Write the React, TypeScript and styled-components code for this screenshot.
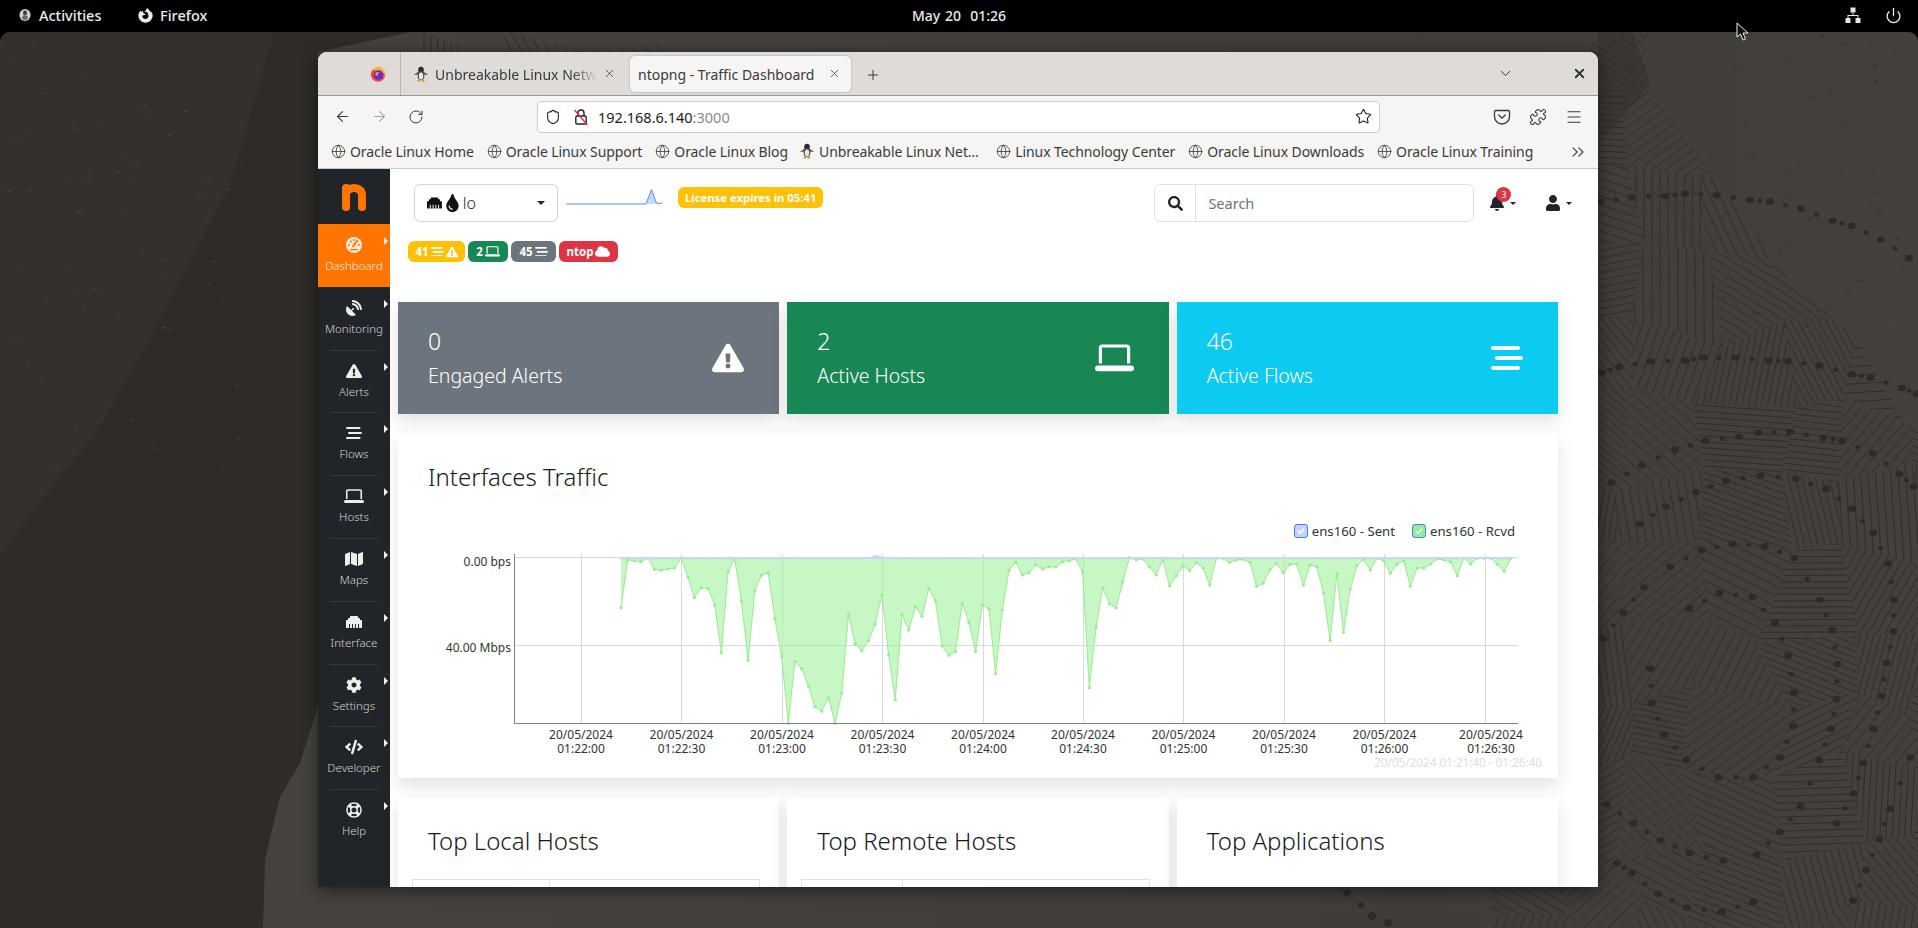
import { createGlobalStyle, styled } from "styled-components";
import {
	FaBell,
	FaCloud,
	FaCode,
	FaCog,
	FaEthernet,
	FaExclamationTriangle,
	FaFirefoxBrowser,
	FaMap,
	FaRegLifeRing,
	FaSatelliteDish,
	FaSearch,
	FaTint,
	FaUser,
} from "react-icons/fa";
import {
	ArrowLeft,
	ArrowRight,
	ChevronDown,
	ChevronsRight,
	Globe,
	Menu,
	Plus,
	Power,
	Puzzle,
	RotateCw,
	Shield,
	Star,
	X,
} from "lucide-react";

const UI_FONT = `"Noto Sans", "Open Sans", sans-serif`;
const PAGE_FONT = `"Noto Sans", "Open Sans", sans-serif`;

const GlobalStyle = createGlobalStyle`
	html, body {
		margin: 0;
		padding: 0;
		background: #000;
		overflow: hidden;
	}
	* {
		box-sizing: border-box;
	}
`;

const Screen = styled.div`
	position: relative;
	display: flex;
	flex-direction: column;
	width: 1918px;
	height: 928px;
	overflow: hidden;
	background: #000;
	font-family: ${UI_FONT};
`;

const TopBar = styled.div`
	position: relative;
	display: flex;
	align-items: center;
	flex: 0 0 32px;
	padding: 0 16px 2px 19px;
	color: #ececec;
	font-size: 14.5px;
	font-weight: 500;
`;

const TopItem = styled.div<{ $gap: number; $width?: number }>`
	display: flex;
	align-items: center;
	gap: ${(p) => p.$gap}px;
	width: ${(p) => (p.$width ? `${p.$width}px` : "auto")};
`;

const Clock = styled.div`
	position: absolute;
	left: 0;
	right: 0;
	text-align: center;
	font-size: 14px;
	word-spacing: 1px;
	pointer-events: none;
`;

const TopRight = styled.div`
	display: flex;
	align-items: center;
	gap: 24px;
	margin-left: auto;
`;

const Cursor = styled.svg`
	position: absolute;
	left: 1736px;
	top: 22px;
	z-index: 5;
`;

const Desktop = styled.div`
	position: relative;
	flex: 1;
	min-height: 0;
	padding: 20px 0 0 318px;
	border-radius: 10px 10px 0 0;
	overflow: hidden;
	background: #2e2b28;
`;

const WallpaperSvg = styled.svg`
	position: absolute;
	left: 0;
	top: 0;
`;

const BrowserWindow = styled.div`
	position: relative;
	display: flex;
	flex-direction: column;
	width: 1280px;
	height: 835px;
	border-radius: 9px 9px 0 0;
	overflow: hidden;
	box-shadow: 0 3px 16px rgba(0, 0, 0, 0.55);
	background: #fff;
`;

const TabBar = styled.div`
	display: flex;
	align-items: center;
	flex: 0 0 44px;
	background: #dedbd8;
	border-bottom: 1px solid #999794;
	color: #3a3a3a;
	font-size: 14px;
`;

const FirefoxCell = styled.div`
	display: flex;
	align-items: center;
	justify-content: flex-end;
	align-self: stretch;
	width: 83px;
	padding-right: 14px;
	border-right: 1px solid #b9b6b3;
`;

const Tab = styled.div<{ $active?: boolean }>`
	display: flex;
	align-items: center;
	height: 36px;
	width: ${(p) => (p.$active ? 221 : 229)}px;
	padding: ${(p) => (p.$active ? "0 10px 0 8px" : "0 14px 0 12px")};
	gap: 6px;
	border-radius: 5px;
	background: ${(p) => (p.$active ? "#f6f5f4" : "transparent")};
	box-shadow: ${(p) => (p.$active ? "0 0 2px rgba(0,0,0,.3)" : "none")};
`;

const TabLabel = styled.span<{ $fade?: boolean }>`
	flex: 1;
	margin-top: 1px;
	overflow: hidden;
	white-space: nowrap;
	${(p) =>
		p.$fade
			? "mask-image: linear-gradient(to right, #000 85%, transparent 100%);"
			: ""}
`;

const NewTab = styled.div`
	display: flex;
	margin: 2px 0 0 14px;
	color: #3a3a3a;
`;

const TabEnd = styled.div`
	display: flex;
	align-items: center;
	gap: 58px;
	margin-left: auto;
	padding-right: 11px;
	color: #333;
`;

const NavBar = styled.div`
	display: flex;
	align-items: center;
	flex: 0 0 39px;
	padding: 2px 0 0 16px;
	background: #f6f5f4;
	color: #3a3a3a;
`;

const NavIcons = styled.div`
	display: flex;
	align-items: center;
	gap: 20px;
	width: 203px;
`;

const UrlBar = styled.div`
	display: flex;
	align-items: center;
	width: 843px;
	height: 32px;
	padding: 0 7px 0 7px;
	background: #fff;
	border: 1px solid #cfcdca;
	border-radius: 4px;
	font-size: 14.5px;
	color: #1c1c1c;
`;

const UrlGap = styled.span`
	width: 13px;
`;

const UrlText = styled.span`
	margin-left: 10px;
	flex: 1;
`;

const UrlPort = styled.span`
	color: #8a8a8a;
`;

const NavTools = styled.div`
	display: flex;
	align-items: center;
	gap: 18px;
	margin-left: 113px;
`;

const BookmarkBar = styled.div`
	position: relative;
	display: flex;
	align-items: center;
	flex: 0 0 34px;
	padding: 0 0 1px 13px;
	gap: 13px;
	background: #f6f5f4;
	border-bottom: 1px solid #cdcbc8;
	color: #3a3a3a;
	font-size: 14px;
	letter-spacing: -0.09px;
`;

const Bookmark = styled.div<{ $tux?: boolean }>`
	display: flex;
	align-items: center;
	gap: 4px;
	margin: ${(p) => (p.$tux ? "0 4.4px 0 -2px" : "0")};
	white-space: nowrap;
`;

const BookmarkMore = styled.div`
	display: flex;
	position: absolute;
	right: 10px;
	top: 7px;
`;

const PageArea = styled.div`
	display: flex;
	flex: 1;
	min-height: 0;
`;

const Sidebar = styled.div`
	flex: 0 0 72px;
	background: #212529;
`;

const LogoBox = styled.div`
	display: flex;
	align-items: center;
	justify-content: center;
	height: 55px;
	padding-top: 1px;
`;

const NavItem = styled.div<{ $active?: boolean; $line?: boolean }>`
	position: relative;
	display: flex;
	flex-direction: column;
	align-items: center;
	gap: 5px;
	height: 62.8px;
	padding-top: 13px;
	background: ${(p) => (p.$active ? "#ff7500" : "transparent")};
	color: ${(p) => (p.$active ? "#ffeee2" : "#d2d4d6")};
	font-size: 11.5px;
	font-weight: 300;
	line-height: 15px;

	&::before {
		content: "";
		display: ${(p) => (p.$line ? "block" : "none")};
		position: absolute;
		left: 12px;
		right: 12px;
		top: 0;
		border-top: 1px solid rgba(255, 255, 255, 0.09);
	}

	&::after {
		content: "";
		position: absolute;
		right: 2px;
		top: 13px;
		border-left: 4px solid #f0f0f0;
		border-top: 4px solid transparent;
		border-bottom: 4px solid transparent;
	}
`;

const NavIcon = styled.div`
	display: flex;
	align-items: center;
	justify-content: center;
	height: 16px;
	color: #eceded;
`;

const Main = styled.div`
	flex: 1;
	min-width: 0;
	overflow: hidden;
	background: #fff;
	font-family: ${PAGE_FONT};
	color: #212529;
`;

const Header = styled.div`
	display: flex;
	align-items: flex-start;
	padding: 15px 26px 0 24px;
`;

const Select = styled.div`
	display: flex;
	align-items: center;
	width: 144px;
	height: 38px;
	padding: 0 12px;
	gap: 3px;
	border: 1px solid #ced4da;
	border-radius: 6px;
	color: #212529;
	font-size: 16px;
	font-weight: 300;
`;

const Caret = styled.span<{ $size?: number; $color?: string; $left?: number }>`
	display: inline-block;
	margin-left: ${(p) => p.$left ?? 0}px;
	border-top: ${(p) => p.$size ?? 4}px solid ${(p) => p.$color ?? "#212529"};
	border-left: ${(p) => p.$size ?? 4}px solid transparent;
	border-right: ${(p) => p.$size ?? 4}px solid transparent;
`;

const Spark = styled.svg`
	flex: none;
	margin-left: 8px;
	margin-top: 3px;
`;

const LicenseBadge = styled.div`
	display: flex;
	align-items: center;
	height: 21px;
	margin: 3px 0 0 16px;
	padding: 0 7px;
	border-radius: 6px;
	background: #ffc107;
	color: #fff;
	font-size: 11.3px;
	font-weight: 700;
	white-space: nowrap;
`;

const SearchGroup = styled.div`
	display: flex;
	height: 38px;
	width: 320px;
	margin-left: auto;
	border: 1px solid #dee2e6;
	border-radius: 6px;
`;

const SearchIcon = styled.div`
	display: flex;
	align-items: center;
	justify-content: center;
	flex: 0 0 41px;
	border-right: 1px solid #dee2e6;
	color: #212529;
`;

const SearchInput = styled.input`
	flex: 1;
	min-width: 0;
	padding: 0 12px;
	border: 0;
	outline: 0;
	background: transparent;
	font-family: inherit;
	font-size: 14.5px;

	&::placeholder {
		color: #6c757d;
	}
`;

const HeadTool = styled.div<{ $left: number }>`
	position: relative;
	display: flex;
	align-items: center;
	gap: 5px;
	height: 38px;
	margin-left: ${(p) => p.$left}px;
	color: #212529;
`;

const CountBubble = styled.span`
	position: absolute;
	left: 7px;
	top: 3px;
	display: flex;
	align-items: center;
	justify-content: center;
	width: 15px;
	height: 15px;
	border-radius: 50%;
	background: #dc3545;
	color: #fff;
	font-size: 9px;
`;

const BadgeRow = styled.div`
	display: flex;
	gap: 3px;
	margin: 19px 0 0 18px;
`;

const Badge = styled.div<{ $bg: string; $width: number }>`
	display: flex;
	align-items: center;
	justify-content: center;
	gap: 2px;
	width: ${(p) => p.$width}px;
	height: 21px;
	border-radius: 6px;
	background: ${(p) => p.$bg};
	color: #fff;
	font-size: 11.5px;
	font-weight: 700;
`;

const CardGrid = styled.div<{ $top: number }>`
	display: grid;
	grid-template-columns: repeat(3, 1fr);
	gap: 8px;
	width: 1160px;
	margin: ${(p) => p.$top}px 0 0 8px;
`;

const StatCard = styled.div<{ $bg: string; $inset: number }>`
	display: flex;
	justify-content: space-between;
	align-items: center;
	height: 112px;
	padding: 0 ${(p) => p.$inset}px 0 30px;
	background: ${(p) => p.$bg};
	color: #fff;
	box-shadow: 0 8px 16px rgba(33, 37, 41, 0.13);
`;

const StatText = styled.div`
	align-self: flex-start;
	padding-top: 25px;
`;

const StatValue = styled.div`
	font-size: 23px;
	font-weight: 300;
	line-height: 28px;
	margin-bottom: 7px;
`;

const StatLabel = styled.div`
	font-size: 19.5px;
	font-weight: 300;
	line-height: 28px;
`;

const ChartCard = styled.div`
	width: 1160px;
	height: 344px;
	margin: 20px 0 0 8px;
	padding-top: 29px;
	background: #fff;
	box-shadow: 0 8px 16px rgba(33, 37, 41, 0.13);
`;

const CardTitle = styled.h3`
	margin: 0;
	padding-left: 30px;
	font-size: 24px;
	font-weight: 300;
	line-height: 28px;
	color: #16191c;
`;

const Legend = styled.div`
	display: flex;
	justify-content: flex-end;
	gap: 17px;
	height: 20px;
	margin-top: 30px;
	padding-right: 43px;
	font-size: 13.2px;
	line-height: 20px;
	color: #333;
`;

const LegendItem = styled.div`
	display: flex;
	align-items: center;
	gap: 4px;
`;

const LegendBox = styled.span<{ $fill: string }>`
	display: flex;
	align-items: center;
	justify-content: center;
	width: 14px;
	height: 14px;
	border: 1px solid #3b82f6;
	border-radius: 3px;
	background: ${(p) => p.$fill};
`;

const ChartSvg = styled.svg`
	display: block;
	margin-top: -1px;
	font-family: ${UI_FONT};
`;

const ListCard = styled.div`
	height: 120px;
	padding-top: 29px;
	background: #fff;
	box-shadow: 0 8px 16px rgba(33, 37, 41, 0.13);
`;

const TopTable = styled.div<{ $first: number; $left: number; $right: number }>`
	display: grid;
	grid-template-columns: ${(p) => p.$first}px 1fr;
	height: 40px;
	margin: 24px ${(p) => p.$right}px 0 ${(p) => p.$left}px;
	border: 1px solid #dee2e6;

	& > div + div {
		border-left: 1px solid #dee2e6;
	}
`;

function seeded(seed: number) {
	let s = seed;
	return () => {
		s = (s * 16807) % 2147483647;
		return s / 2147483647;
	};
}

// dotted trails of the wallpaper, read off the reference (crop coordinates)
const DOT_TRAILS = [
	[[30, 300], [125, 292], [225, 290], [285, 286], [380, 288], [480, 297], [540, 300], [633, 312], [728, 333], [785, 342], [873, 366], [957, 398]],
	[[35, 598], [88, 588], [182, 579], [285, 577], [340, 572], [436, 572], [536, 578], [594, 578], [688, 586], [786, 601], [842, 607], [935, 625], [980, 635]],
	[[505, 703], [600, 702], [700, 712], [758, 717], [848, 739], [928, 775], [970, 797]],
	[[65, 790], [155, 760], [255, 733], [347, 717], [447, 710]],
	[[150, 862], [228, 832], [318, 807], [408, 787], [510, 778], [617, 783], [708, 801], [785, 836], [850, 878], [895, 932], [912, 995], [910, 1050], [890, 1105], [875, 1163], [850, 1220], [820, 1280], [790, 1333], [740, 1385]],
	[[240, 937], [335, 908], [427, 897], [524, 901], [613, 922], [690, 995], [727, 1048], [742, 1107], [740, 1168], [722, 1220], [688, 1275], [632, 1355], [570, 1400], [500, 1440]],
	[[40, 1062], [100, 1017], [162, 973]],
	[[298, 1010], [388, 983], [487, 990], [555, 1035], [595, 1092], [612, 1157], [610, 1215], [570, 1270]],
	[[180, 1115], [185, 1175], [222, 1230], [288, 1275], [385, 1305], [490, 1305], [570, 1270]],
	[[50, 1352], [130, 1385], [212, 1415], [298, 1437], [400, 1450]],
	[[80, 1455], [125, 1472], [205, 1508], [290, 1532], [395, 1540], [490, 1522]],
	[[960, 1270], [900, 1360], [868, 1413], [828, 1467], [790, 1520]],
];

const HATCH_AREA =
	"1647,32 1647,55 1707,135 1790,250 1857,307 1907,393 1918,398 1918,928 1490,928 1490,855 1590,855 1590,-20 1647,-20";

function Wallpaper() {
	const rnd = seeded(4211);
	const size = 74;
	const jitter = (v: number) => v + (rnd() - 0.5) * 44;
	const verts: [number, number][][] = [];
	for (let i = 0; i < 28; i++) {
		const col: [number, number][] = [];
		for (let j = 0; j < 14; j++) {
			col.push([jitter(i * size), jitter(j * size)]);
		}
		verts.push(col);
	}
	const cells: { id: string; pts: string; lines: string }[] = [];
	for (let i = 0; i < 27; i++) {
		for (let j = 0; j < 13; j++) {
			const a = verts[i][j];
			const b = verts[i + 1][j];
			const c = verts[i + 1][j + 1];
			const d = verts[i][j + 1];
			const angle = rnd() * Math.PI;
			const gap = 6 + rnd() * 3;
			const cx = (a[0] + c[0]) / 2;
			const cy = (a[1] + c[1]) / 2;
			const inStrip = cy > 810 && cx > 1440;
			const inTop = cy < 50 && cx > 400 && cx < 700;
			if (b[0] < 1590 && !inStrip && !inTop) continue;
			let lines = "";
			for (let k = -90; k < 90; k += gap) {
				const nx = -Math.sin(angle) * k;
				const ny = Math.cos(angle) * k;
				const ux = Math.cos(angle) * 90;
				const uy = Math.sin(angle) * 90;
				lines += `M${(cx + nx - ux).toFixed(1)} ${(cy + ny - uy).toFixed(1)}L${(cx + nx + ux).toFixed(1)} ${(cy + ny + uy).toFixed(1)}`;
			}
			cells.push({
				id: `cell-${i}-${j}`,
				pts: [a, b, c, d].map((v) => v.join(",")).join(" "),
				lines,
			});
		}
	}
	const dots: { x: number; y: number; rx: number; ry: number }[] = [];
	for (const trail of DOT_TRAILS) {
		trail.forEach(([zx, zy], i) => {
			const x = 1590 + zx / 3;
			const y = 30 + zy / 1.746 - 32;
			dots.push({ x, y, rx: 4, ry: 3.2 });
			if (i + 1 < trail.length) {
				const nx = 1590 + trail[i + 1][0] / 3;
				const ny = 30 + trail[i + 1][1] / 1.746 - 32;
				dots.push({ x: (x + nx) / 2, y: (y + ny) / 2, rx: 2.6, ry: 2.2 });
			}
		});
	}
	const specks: { x: number; y: number; w: number; light: boolean }[] = [];
	for (let i = 0; i < 130; i++) {
		const light = i < 60;
		specks.push(
			light
				? { x: rnd() * 250, y: rnd() * 440, w: 1 + rnd() * 2.4, light }
				: { x: 1650 + rnd() * 268, y: rnd() * 300, w: 0.8 + rnd() * 1.8, light },
		);
	}
	return (
		<WallpaperSvg width="1918" height="896" viewBox="0 0 1918 896">
			<defs>
				<clipPath id="hatch-area">
					<polygon points={HATCH_AREA} />
					<rect x="420" y="-5" width="260" height="30" />
				</clipPath>
				{cells.map((c) => (
					<clipPath key={c.id} id={c.id}>
						<polygon points={c.pts} />
					</clipPath>
				))}
				<linearGradient id="wall-light" x1="0" x2="1" y1="0" y2="0">
					<stop offset="0" stopColor="#46423f" />
					<stop offset="0.7" stopColor="#403c39" />
					<stop offset="1" stopColor="#44403d" />
				</linearGradient>
			</defs>
			<polygon points="0,522 97,399 150,307 230,153 275,-2 0,-2" fill="#33302d" />
			<polygon
				points="263,896 265,828 280,765 300,731 318,674 318,20 420,-2 1918,-2 1918,896"
				fill="url(#wall-light)"
			/>
			<polygon points="1598,-2 1632,-2 1650,52 1612,98 1598,108" fill="#3a3633" />
			<g clipPath="url(#hatch-area)">
				{cells.map((c) => (
					<g key={c.id} clipPath={`url(#${c.id})`}>
						<path d={c.lines} stroke="#322e2b" strokeWidth="1" fill="none" />
					</g>
				))}
			</g>
			{dots.map((d, i) => (
				<ellipse
					key={`dot-${i.toString()}`}
					cx={d.x}
					cy={d.y}
					rx={d.rx}
					ry={d.ry}
					fill="#2e2a28"
				/>
			))}
			<ellipse cx="1347" cy="861" rx="3.5" ry="3.5" fill="#2e2a28" />
			<ellipse cx="1361" cy="873" rx="3" ry="3" fill="#2e2a28" />
			<ellipse cx="1372" cy="884" rx="4" ry="4" fill="#2e2a28" />
			<ellipse cx="1388" cy="891" rx="4" ry="4" fill="#2e2a28" />
			{specks.map((s, i) => (
				<ellipse
					key={`speck-${i.toString()}`}
					cx={s.x}
					cy={s.y}
					rx={s.w}
					ry="0.6"
					fill={s.light ? "#45413d" : "#322e2b"}
				/>
			))}
		</WallpaperSvg>
	);
}

function FirefoxLogo() {
	return (
		<svg width="16" height="16" viewBox="0 0 16 16">
			<circle cx="8" cy="8.6" r="7.2" fill="#f2483f" />
			<path d="M3 4 C5 1 8 0 10 0 C10 1 11 1.5 12.5 2.5 C15 4.5 15.5 8 15 10 C14 6 11 4.5 8 5 Z" fill="#ffb52e" />
			<circle cx="8.4" cy="9" r="4.8" fill="#6a2bd4" />
			<path d="M5 8 C6 5.5 9 5.5 10 6.5 L7.5 7.5 L8.5 9 C7 10 5.5 9.5 5 8 Z" fill="#ffa436" />
		</svg>
	);
}

function TuxIcon() {
	return (
		<svg width="16" height="16" viewBox="0 0 16 16">
			<path d="M0.5 9 L5 6 L11 6 L15.5 9 L11 8.5 L5 8.5 Z" fill="#57534e" />
			<ellipse cx="8" cy="4" rx="2.8" ry="3.2" fill="#2a2a2a" />
			<ellipse cx="8" cy="9.5" rx="3.4" ry="4.6" fill="#4a4a4a" />
			<ellipse cx="8" cy="10" rx="2.2" ry="3.4" fill="#e8e8e8" />
			<path d="M4.5 14 h3 v1.5 h-3z M8.5 14 h3 v1.5 h-3z" fill="#c9a227" />
		</svg>
	);
}

function BrokenLock() {
	return (
		<svg width="14" height="18" viewBox="0 0 14 18" fill="none">
			<path d="M4 8 V5 a3 3 0 0 1 6 0 V8" stroke="#222" strokeWidth="1.4" />
			<rect x="1.8" y="8" width="10.4" height="8" rx="1.6" stroke="#222" strokeWidth="1.4" />
			<path d="M0.5 2 L13.5 17" stroke="#e22850" strokeWidth="1.4" />
		</svg>
	);
}

function PocketIcon() {
	return (
		<svg width="18" height="18" viewBox="0 0 18 18" fill="none" stroke="#3a3a3a" strokeWidth="1.3">
			<path d="M2.5 2.5 H15.5 a1 1 0 0 1 1 1 V8.5 a7.5 7.5 0 0 1 -15 0 V3.5 a1 1 0 0 1 1 -1 Z" />
			<path d="M5.8 7 L9 10.2 L12.2 7" strokeLinecap="round" />
		</svg>
	);
}

function NetworkIcon() {
	return (
		<svg width="16" height="16" viewBox="0 0 16 16" fill="#e6e6e6">
			<rect x="5.5" y="0.5" width="5" height="5" />
			<rect x="0.5" y="11" width="5" height="5" />
			<rect x="10.5" y="11" width="5" height="5" />
			<path d="M7.5 5.5 h1 V8 H13.5 V11 h-1 V9 H3.5 V11 h-1 V8 H7.5 Z" />
		</svg>
	);
}

function ActivitiesIcon() {
	return (
		<svg width="12" height="14" viewBox="0 0 12 14">
			<ellipse cx="6" cy="7" rx="5.6" ry="6" fill="#cfcfcf" />
			<ellipse cx="6" cy="5" rx="2" ry="2.4" fill="#3c3c3c" />
			<ellipse cx="6" cy="9.6" rx="2.8" ry="2.4" fill="#6a6a6a" />
		</svg>
	);
}

function NtopLogo() {
	return (
		<svg width="24" height="27" viewBox="0 0 24 27" fill="none">
			<path
				d="M4 23 V4 M4 11.5 C4 6.5 7.5 4 12 4 C16.5 4 20 6.5 20 11.5 V23"
				stroke="#ff7500"
				strokeWidth="8"
				strokeLinecap="round"
			/>
		</svg>
	);
}

function FlowsIcon({ size }: { size: number }) {
	return (
		<svg width={size} height={(size * 24) / 32} viewBox="0 0 32 24" fill="none" stroke="currentColor" strokeWidth="4" strokeLinecap="round">
			<path d="M2 2 H27 M6 12 H30 M2 22 H27" />
		</svg>
	);
}

function LaptopIcon({ width }: { width: number }) {
	return (
		<svg width={width} height={(width * 28) / 40} viewBox="0 0 40 28" fill="none">
			<path d="M5.5 20 V4 a2 2 0 0 1 2 -2 H32.5 a2 2 0 0 1 2 2 V20" stroke="currentColor" strokeWidth="3.2" />
			<rect x="0" y="22" width="40" height="6" rx="3" fill="currentColor" />
		</svg>
	);
}

function GaugeIcon() {
	return (
		<svg width="16" height="16" viewBox="0 0 16 16">
			<circle cx="8" cy="8" r="8" fill="#fbe9dc" />
			<path d="M7 9.4 L11.2 3.6" stroke="#ff7500" strokeWidth="1.8" strokeLinecap="round" />
			<circle cx="3" cy="8" r="1" fill="#ff7500" />
			<circle cx="4.8" cy="4.5" r="1" fill="#ff7500" />
			<circle cx="8" cy="3" r="1" fill="#ff7500" />
			<circle cx="13" cy="8" r="1" fill="#ff7500" />
			<path d="M4 12.6 H12" stroke="#ff7500" strokeWidth="1.2" />
		</svg>
	);
}

function Sparkline() {
	return (
		<Spark width="96" height="20" viewBox="0 0 96 20">
			<path d="M0 17 H80 L85.5 2.5 L90 15 L92 16.5 L96 16 V17 Z" fill="#c4d8fb" />
			<path d="M0 17 H80 L85.5 2.5 L90 15 L92 16.5 L96 16" fill="none" stroke="#5b8def" strokeWidth="1" />
		</Spark>
	);
}

// received traffic: one sample every 2s, y read as crop pixels of the reference
const RCVD = [
	293, 150, 152, 155, 144, 178, 181, 177, 174, 145, 201, 263, 233, 236, 285, 428, 186, 147, 272, 451,
	241, 196, 188, 326, 438, 640, 454, 476, 528, 590, 604, 563, 640, 549, 312, 401, 422, 392, 342, 253,
	434, 569, 313, 360, 290, 319, 236, 271, 408, 436, 425, 280, 338, 424, 285, 296, 491, 300, 181, 157,
	195, 188, 164, 177, 170, 171, 156, 152, 147, 185, 533, 352, 234, 281, 294, 216, 143, 150, 147, 170,
	195, 149, 228, 197, 168, 182, 158, 174, 225, 144, 147, 157, 150, 148, 157, 229, 220, 180, 161, 188,
	163, 162, 225, 165, 171, 249, 392, 191, 367, 238, 167, 148, 180, 145, 152, 190, 163, 152, 229, 174,
	174, 162, 147, 150, 156, 197, 145, 162, 145, 145, 145, 163, 184, 146,
];

const X0 = 621;
const STEP = 6.69;
const BASE_Y = 558.3;
const GRID_X = [581, 681.5, 782.5, 882.5, 983.3, 1083, 1183.5, 1284.5, 1384.4, 1485.4];
const X_TICKS = [
	{ x: 581, t: "01:22:00" },
	{ x: 681.5, t: "01:22:30" },
	{ x: 782, t: "01:23:00" },
	{ x: 882.5, t: "01:23:30" },
	{ x: 983, t: "01:24:00" },
	{ x: 1083, t: "01:24:30" },
	{ x: 1183.5, t: "01:25:00" },
	{ x: 1284, t: "01:25:30" },
	{ x: 1384.5, t: "01:26:00" },
	{ x: 1491, t: "01:26:30" },
];

function TrafficChart() {
	const pts = RCVD.map((zy, i) => [X0 + i * STEP, 510 + zy / 3]);
	const line = pts.map((p) => `${p[0].toFixed(1)},${p[1].toFixed(1)}`).join(" ");
	const lastX = pts[pts.length - 1][0];
	const sentXs = pts.map((p) => p[0]);
	return (
		<ChartSvg width="1160" height="238" viewBox="398 540 1160 238">
			{GRID_X.map((x) => (
				<line key={x} x1={x} x2={x} y1="554" y2="723" stroke="#d9d9d9" shapeRendering="crispEdges" />
			))}
			<line x1="515" x2="1518" y1="557" y2="557" stroke="#d9d9d9" shapeRendering="crispEdges" />
			<line x1="515" x2="1518" y1="645" y2="645" stroke="#d9d9d9" shapeRendering="crispEdges" />
			<polygon
				points={`${X0},${BASE_Y} ${line} ${lastX},${BASE_Y}`}
				fill="#a5f2a0"
				fillOpacity="0.62"
			/>
			<polyline points={line} fill="none" stroke="#96ee8e" strokeWidth="1" />
			{pts.map((p, i) => (
				<circle key={`r-${i.toString()}`} cx={p[0]} cy={p[1]} r="1.6" fill="#96ee8e" />
			))}
			<line x1={X0} x2={lastX} y1={BASE_Y} y2={BASE_Y} stroke="#c9d6fb" strokeWidth="1.2" />
			{sentXs.map((x, i) => (
				<circle key={`s-${i.toString()}`} cx={x} cy={BASE_Y} r="1.5" fill="#c9d6fb" />
			))}
			<path d="M868 558 L873 556 L876 554.8 L880 556 L884 558 Z" fill="#c9d6fb" />
			<line x1="514.5" x2="514.5" y1="554" y2="723.5" stroke="#808080" />
			<line x1="514" x2="1518" y1="723.5" y2="723.5" stroke="#808080" />
			<text x="511" y="566" textAnchor="end" fontSize="12" fill="#333">0.00 bps</text>
			<text x="511" y="652" textAnchor="end" fontSize="12" fill="#333">40.00 Mbps</text>
			{X_TICKS.map((tick) => (
				<text key={tick.t} x={tick.x} textAnchor="middle" fontSize="12" fill="#333">
					<tspan x={tick.x} y="739">20/05/2024</tspan>
					<tspan x={tick.x} y="753">{tick.t}</tspan>
				</text>
			))}
			<text x="1542" y="767" textAnchor="end" fontSize="11.7" fill="#dddddd">
				20/05/2024 01:21:40 - 01:26:40
			</text>
		</ChartSvg>
	);
}

const SIDE_ITEMS = [
	{ label: "Dashboard", icon: <GaugeIcon />, active: true },
	{ label: "Monitoring", icon: <FaSatelliteDish size={16} /> },
	{ label: "Alerts", icon: <FaExclamationTriangle size={16} />, line: true },
	{ label: "Flows", icon: <FlowsIcon size={16} />, line: true },
	{ label: "Hosts", icon: <LaptopIcon width={20} />, line: true },
	{ label: "Maps", icon: <FaMap size={18} />, line: true },
	{ label: "Interface", icon: <FaEthernet size={16} />, line: true },
	{ label: "Settings", icon: <FaCog size={16} />, line: true },
	{ label: "Developer", icon: <FaCode size={18} />, line: true },
	{ label: "Help", icon: <FaRegLifeRing size={16} />, line: true },
];

const BOOKMARKS = [
	"Oracle Linux Home",
	"Oracle Linux Support",
	"Oracle Linux Blog",
	"Unbreakable Linux Net…",
	"Linux Technology Center",
	"Oracle Linux Downloads",
	"Oracle Linux Training",
];

export default function App() {
	return (
		<Screen>
			<GlobalStyle />
			<TopBar>
				<TopItem $gap={8} $width={119}>
					<ActivitiesIcon />
					Activities
				</TopItem>
				<TopItem $gap={7}>
					<FaFirefoxBrowser size={15} />
					Firefox
				</TopItem>
				<Clock>May 20 &nbsp;01:26</Clock>
				<TopRight>
					<NetworkIcon />
					<Power size={17} strokeWidth={1.8} />
				</TopRight>
			</TopBar>
			<Cursor width="13" height="19" viewBox="0 0 13 19">
				<path d="M1 1 L1 15 L4.5 12 L7 18 L9.5 17 L7 11 L12 11 Z" fill="#111" stroke="#eee" strokeWidth="1" />
			</Cursor>
			<Desktop>
				<Wallpaper />
				<BrowserWindow>
					<TabBar>
						<FirefoxCell>
							<FirefoxLogo />
						</FirefoxCell>
						<Tab>
							<TuxIcon />
							<TabLabel $fade>Unbreakable Linux Network</TabLabel>
							<X size={13} strokeWidth={1.4} />
						</Tab>
						<Tab $active>
							<TabLabel>ntopng - Traffic Dashboard</TabLabel>
							<X size={13} strokeWidth={1.4} />
						</Tab>
						<NewTab>
							<Plus size={16} strokeWidth={1.5} />
						</NewTab>
						<TabEnd>
							<ChevronDown size={17} strokeWidth={1.4} />
							<X size={15} strokeWidth={3} />
						</TabEnd>
					</TabBar>
					<NavBar>
						<NavIcons>
							<ArrowLeft size={17} strokeWidth={1.5} />
							<ArrowRight size={17} strokeWidth={1.5} color="#a8a8a8" />
							<RotateCw size={16} strokeWidth={1.5} />
						</NavIcons>
						<UrlBar>
							<Shield size={16} strokeWidth={1.6} />
							<UrlGap />
							<BrokenLock />
							<UrlText>
								192.168.6.140<UrlPort>:3000</UrlPort>
							</UrlText>
							<Star size={17} strokeWidth={1.5} />
						</UrlBar>
						<NavTools>
							<PocketIcon />
							<Puzzle size={18} strokeWidth={1.5} />
							<Menu size={18} strokeWidth={1.5} />
						</NavTools>
					</NavBar>
					<BookmarkBar>
						{BOOKMARKS.map((b) => (
							<Bookmark key={b} $tux={b.startsWith("Unbreakable")}>
								{b.startsWith("Unbreakable") ? (
									<TuxIcon />
								) : (
									<Globe size={15} strokeWidth={1.3} />
								)}
								{b}
							</Bookmark>
						))}
						<BookmarkMore>
							<ChevronsRight size={20} strokeWidth={1.3} />
						</BookmarkMore>
					</BookmarkBar>
					<PageArea>
						<Sidebar>
							<LogoBox>
								<NtopLogo />
							</LogoBox>
							{SIDE_ITEMS.map((item) => (
								<NavItem key={item.label} $active={item.active} $line={item.line}>
									<NavIcon>{item.icon}</NavIcon>
									{item.label}
								</NavItem>
							))}
						</Sidebar>
						<Main>
							<Header>
								<Select>
									<FaEthernet size={18} color="#111" />
									<FaTint size={18} color="#111" />
									<span>lo</span>
									<Caret $left={58} />
								</Select>
								<Sparkline />
								<LicenseBadge>License expires in 05:41</LicenseBadge>
								<SearchGroup>
									<SearchIcon>
										<FaSearch size={15} />
									</SearchIcon>
									<SearchInput placeholder="Search" readOnly />
								</SearchGroup>
								<HeadTool $left={15}>
									<FaBell size={16} />
									<CountBubble>3</CountBubble>
									<Caret $size={3.5} $left={0} />
								</HeadTool>
								<HeadTool $left={28.6}>
									<FaUser size={16} />
									<Caret $size={3.5} $left={0} />
								</HeadTool>
							</Header>
							<BadgeRow>
								<Badge $bg="#ffc107" $width={57}>
									41 <FlowsIcon size={13} /> <FaExclamationTriangle size={12} />
								</Badge>
								<Badge $bg="#198754" $width={40}>
									2 <LaptopIcon width={15} />
								</Badge>
								<Badge $bg="#6c757d" $width={45}>
									45 <FlowsIcon size={13} />
								</Badge>
								<Badge $bg="#dc3545" $width={59}>
									ntop <FaCloud size={15} />
								</Badge>
							</BadgeRow>
							<CardGrid $top={40}>
								<StatCard $bg="#6c757d" $inset={35}>
									<StatText>
										<StatValue>0</StatValue>
										<StatLabel>Engaged Alerts</StatLabel>
									</StatText>
									<FaExclamationTriangle size={32} />
								</StatCard>
								<StatCard $bg="#198754" $inset={35}>
									<StatText>
										<StatValue>2</StatValue>
										<StatLabel>Active Hosts</StatLabel>
									</StatText>
									<LaptopIcon width={39} />
								</StatCard>
								<StatCard $bg="#0dcaf0" $inset={35}>
									<StatText>
										<StatValue>46</StatValue>
										<StatLabel>Active Flows</StatLabel>
									</StatText>
									<FlowsIcon size={32} />
								</StatCard>
							</CardGrid>
							<ChartCard>
								<CardTitle>Interfaces Traffic</CardTitle>
								<Legend>
									<LegendItem>
										<LegendBox $fill="#c6d4fb">
											<svg width="8" height="8" viewBox="0 0 8 8" fill="none" stroke="#fff" strokeWidth="1.4">
												<path d="M1 4 L3.2 6.2 L7 1.8" />
											</svg>
										</LegendBox>
										ens160 - Sent
									</LegendItem>
									<LegendItem>
										<LegendBox $fill="#96ee8e">
											<svg width="8" height="8" viewBox="0 0 8 8" fill="none" stroke="#fff" strokeWidth="1.4">
												<path d="M1 4 L3.2 6.2 L7 1.8" />
											</svg>
										</LegendBox>
										ens160 - Rcvd
									</LegendItem>
								</Legend>
								<TrafficChart />
							</ChartCard>
							<CardGrid $top={20}>
								<ListCard>
									<CardTitle>Top Local Hosts</CardTitle>
									<TopTable $first={136} $left={14} $right={19}>
										<div />
										<div />
									</TopTable>
								</ListCard>
								<ListCard>
									<CardTitle>Top Remote Hosts</CardTitle>
									<TopTable $first={100} $left={14} $right={19}>
										<div />
										<div />
									</TopTable>
								</ListCard>
								<ListCard>
									<CardTitle>Top Applications</CardTitle>
								</ListCard>
							</CardGrid>
						</Main>
					</PageArea>
				</BrowserWindow>
			</Desktop>
		</Screen>
	);
}
